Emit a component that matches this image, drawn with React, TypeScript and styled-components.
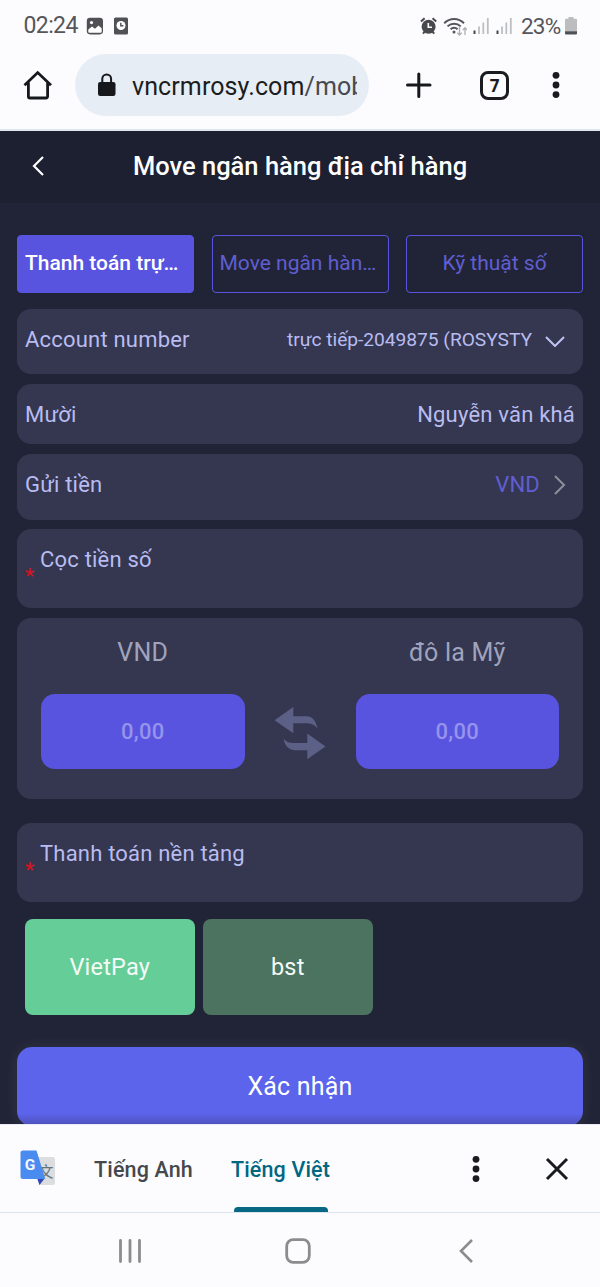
import React from "react";
import styled, { createGlobalStyle, css } from "styled-components";

const GlobalStyle = createGlobalStyle`
  * { box-sizing: border-box; }
  html, body { margin: 0; padding: 0; }
  body { background: #fcfcfe; font-family: Roboto, "Noto Sans", sans-serif; }
  button { font: inherit; border: 0; padding: 0; background: none; color: inherit; }
  svg { display: block; flex: none; }
`;

const Screen = styled.div`
  display: flex;
  flex-direction: column;
  width: 600px;
  height: 1287px;
  overflow: hidden;
  background: #fcfcfe;
`;

/* ---------- system status bar ---------- */

const StatusBar = styled.div`
  display: flex;
  align-items: center;
  height: 52px;
  padding: 0 23px 0 23.5px;
  color: #55565a;
  font-size: 23px;
  line-height: 52px;
`;

const Clock = styled.span`
  width: 62.5px;
  letter-spacing: -0.6px;
  white-space: nowrap;
`;

const StatusGroup = styled.div<{ $end?: boolean }>`
  display: flex;
  align-items: center;
  height: 52px;
  ${(p) => p.$end && css`margin-left: auto;`}
`;

const Gap = styled.span<{ $width: number }>`
  width: ${(p) => p.$width}px;
`;

const Battery = styled.span`
  width: 44px;
  font-size: 22.5px;
  letter-spacing: -0.8px;
  white-space: nowrap;
`;

/* ---------- browser toolbar ---------- */

const Toolbar = styled.div`
  display: flex;
  align-items: center;
  height: 79px;
  padding: 3px 0 14px 20px;
  border-bottom: 2px solid #dfe6ec;
`;

const AddressPill = styled.div`
  display: flex;
  align-items: center;
  width: 294px;
  height: 62px;
  margin: 0 28px 0 20px;
  padding-left: 20px;
  border-radius: 31px;
  background: #e7edf5;
  color: #1b1d21;
`;

const Url = styled.div`
  width: 225px;
  margin-left: 14px;
  padding-top: 3px;
  overflow: hidden;
  white-space: nowrap;
  font-size: 25px;
  line-height: 36px;
  letter-spacing: 0.1px;
`;

const UrlPath = styled.span`
  color: #474a50;
`;

const TabCount = styled.div`
  display: flex;
  align-items: center;
  justify-content: center;
  width: 29px;
  height: 29px;
  margin: 0 42px 0 40px;
  border: 3px solid #1b1c1f;
  border-radius: 8px;
  color: #1b1c1f;
  font-family: "Open Sans", sans-serif;
  font-size: 17px;
  font-weight: 700;
  line-height: 23px;
`;

/* ---------- site ---------- */

const Site = styled.main`
  height: 993px;
  overflow: hidden;
  background: #212436;
`;

const Header = styled.header`
  display: grid;
  grid-template-columns: 60px 1fr 60px;
  align-items: center;
  height: 72px;
  padding-bottom: 2px;
  background: #1d2030;
  color: #fff;
`;

const BackButton = styled.button`
  display: flex;
  justify-content: center;
  padding-left: 16px;
`;

const Title = styled.h1`
  margin: 0;
  font-size: 25.5px;
  font-weight: 500;
  line-height: 36px;
  text-align: center;
  white-space: nowrap;
`;

const Content = styled.div`
  padding: 32px 17px 0;
`;

const Tabs = styled.div`
  display: grid;
  grid-template-columns: repeat(3, 1fr);
  gap: 17.5px;
  margin-bottom: 16px;
`;

const Tab = styled.button<{ $active?: boolean; $long?: boolean }>`
  height: 58px;
  padding: 0 7px 2px;
  border: 1px solid #5854dd;
  border-radius: 4px;
  background: ${(p) => (p.$active ? "#5854e0" : "transparent")};
  color: ${(p) => (p.$active ? "#fff" : "#605ed2")};
  font-size: 21px;
  font-weight: ${(p) => (p.$active ? 500 : 400)};
  text-align: ${(p) => (p.$long ? "left" : "center")};
  white-space: nowrap;
  overflow: hidden;
`;

const Card = styled.section<{ $height: number; $gap?: number }>`
  height: ${(p) => p.$height}px;
  margin-bottom: ${(p) => p.$gap ?? 10}px;
  border-radius: 14px;
  background: #34374f;
`;

const Line = styled.div<{ $right?: number }>`
  display: flex;
  align-items: center;
  height: 61px;
  padding: 0 ${(p) => p.$right ?? 8}px 0 8px;
  color: #b9bcf1;
  font-size: 22px;
  line-height: 32px;
  letter-spacing: 0.2px;
  white-space: nowrap;
`;

const Value = styled.span<{ $size?: number; $tone?: string; $space?: number }>`
  margin-left: auto;
  color: ${(p) => p.$tone ?? "inherit"};
  font-size: ${(p) => p.$size ?? 22}px;
  letter-spacing: ${(p) => p.$space ?? 0.2}px;
`;

const Chevron = styled.svg`
  margin-left: 13px;
`;

const Required = styled.span`
  align-self: flex-end;
  width: 15px;
  height: 30px;
  color: #d5141f;
  font-size: 21px;
  font-weight: 500;
  line-height: 32px;
`;

const Exchange = styled.div`
  display: grid;
  grid-template-columns: 203.5px 1fr 203.5px;
  grid-template-rows: 76px 75px;
  padding: 0 24px;
`;

const CurrencyName = styled.div`
  padding-top: 17px;
  color: #a0a3bd;
  font-size: 25px;
  line-height: 36px;
  letter-spacing: 0.2px;
  text-align: center;
`;

const Amount = styled.div`
  display: flex;
  align-items: center;
  justify-content: center;
  border-radius: 14px;
  background: #5854e0;
  color: #9593ec;
  font-size: 22px;
  font-weight: 500;
  letter-spacing: 0.3px;
`;

const Swap = styled.div`
  display: flex;
  align-items: center;
  justify-content: center;
  padding-top: 2px;
`;

const Platforms = styled.div`
  display: flex;
  gap: 8.5px;
  padding: 0 8px;
  margin-bottom: 32px;
`;

const Platform = styled.button<{ $selected?: boolean }>`
  width: 169.5px;
  height: 96px;
  border-radius: 8px;
  background: ${(p) => (p.$selected ? "#65cd98" : "#4c7360")};
  color: #f4fbf7;
  font-size: 23.5px;
  letter-spacing: 0.2px;
`;

const Submit = styled.button`
  width: 100%;
  height: 79px;
  border-radius: 15px;
  background: linear-gradient(#5b64eb 84%, #5052bd 98%);
  box-shadow: 0 0 16px rgba(255, 255, 255, 0.08);
  color: #fff;
  font-size: 25px;
  letter-spacing: 0.2px;
`;

/* ---------- translate bar and system navigation ---------- */

const TranslateBar = styled.div`
  display: flex;
  align-items: center;
  height: 89px;
  padding: 0 30px 0 20px;
  border-top: 1px solid #e9ebf7;
  border-bottom: 1.5px solid #dde3ea;
`;

const Language = styled.div<{ $active?: boolean }>`
  display: flex;
  flex-direction: column;
  align-items: center;
  justify-content: space-between;
  height: 87px;
  margin-left: 38px;
  padding-top: 27px;
  color: ${(p) => (p.$active ? "#006783" : "#45484c")};
  font-size: 21.5px;
  font-weight: 500;
  line-height: 36px;
  letter-spacing: 0.15px;
  white-space: nowrap;
`;

const Indicator = styled.i`
  width: 94px;
  height: 5px;
  border-radius: 4px 4px 0 0;
  background: #086883;
`;

const BarActions = styled.div`
  display: flex;
  align-items: center;
  gap: 63px;
  margin-left: auto;
`;

const SystemNav = styled.nav`
  display: grid;
  grid-template-columns: 40px 40px 40px;
  justify-content: center;
  justify-items: center;
  column-gap: 128px;
  align-items: center;
  height: 74px;
  padding-right: 4px;
  padding-top: 2px;
`;

const Dots = () => (
  <svg width="10" height="28" viewBox="0 0 10 28" fill="#1a1b1e">
    <circle cx="5" cy="4.3" r="3.4" />
    <circle cx="5" cy="14" r="3.4" />
    <circle cx="5" cy="23.6" r="3.4" />
  </svg>
);

const Signal = () => (
  <svg width="17" height="18" viewBox="0 0 17 18">
    <path d="M1.5 13.5V17" stroke="#454649" strokeWidth="2" />
    <path d="M6 9.5V17M10.3 5.5V17M14.8 1V17" stroke="#bdbec1" strokeWidth="1.8" />
  </svg>
);

const SwapIcon = () => (
  <svg width="52" height="52" viewBox="0 0 52 52" fill="#5c5f86">
    <path d="M.5 13.300 19.300 0v9.300H32.500C38.500 9.300 42 14 43.500 21.500 40 17.200 36.500 16.300 32 16.300H19.300V26.200Z" />
    <path d="M51.500 39.500 33.300 26.500v9.500H20c-5 0-8-1.200-10.600-4.700C10.600 38.500 14.700 43.200 21 43.200h12.300v9Z" />
  </svg>
);

const TranslateLogo = () => (
  <svg width="36" height="37" viewBox="0 0 36 37">
    <path d="M14 7h18.500a2.500 2.500 0 0 1 2.500 2.500v23a2.500 2.500 0 0 1-2.500 2.500H19Z" fill="#dcdddf" />
    <text x="18.5" y="26.500" fontSize="15" fill="#65777d" fontFamily="'Noto Sans CJK SC', sans-serif">文</text>
    <path d="M17 28h8l-5.500 7Z" fill="#3547b5" />
    <path d="M3 .5h13.500L25.300 29H3A2.500 2.500 0 0 1 .5 26.500V3A2.500 2.500 0 0 1 3 .5Z" fill="#4a8bf0" />
    <text x="4.800" y="20.300" fontSize="15.500" fontWeight="700" fill="#f3f7ff" fontFamily="Roboto, sans-serif">G</text>
  </svg>
);

export default function App() {
  return (
    <>
      <GlobalStyle />
      <Screen>
        <StatusBar>
          <Clock>02:24</Clock>
          <StatusGroup>
            <svg width="18" height="18" viewBox="0 0 18 18">
              <rect x="1.600" y="1.600" width="14.600" height="15" rx="2.500" fill="#505154" stroke="#505154" strokeWidth="1.600" />
              <circle cx="5.500" cy="5.600" r="1.600" fill="#fff" />
              <path d="M2.300 12.500 6 9.500l3 2.200 3.500-3.200 3.200 2.700v3.600a1 1 0 0 1-1 1H3.300a1 1 0 0 1-1-1Z" fill="#fff" />
            </svg>
            <svg width="25" height="18" viewBox="0 0 25 18">
              <rect x="10" y=".5" width="14" height="17" rx="1.500" fill="#505154" />
              <circle cx="17" cy="8.500" r="4.500" fill="#fff" />
              <path d="M16.800 5.800v3h2.600" fill="none" stroke="#505154" strokeWidth="1.400" />
            </svg>
          </StatusGroup>
          <StatusGroup $end>
            <svg width="18" height="18" viewBox="0 0 18 18">
              <circle cx="8.600" cy="9.700" r="7" fill="#48494c" />
              <path d="M1 4.600 4.600 1.300M16.200 4.600l-3.600-3.300M3 16.700l2-2.300M14.200 16.700l-2-2.300" stroke="#48494c" strokeWidth="2" />
              <path d="M8.300 6v4.300h3.700" fill="none" stroke="#fff" strokeWidth="1.600" />
            </svg>
            <svg width="29" height="20" viewBox="0 0 29 20">
              <g fill="none" stroke="#55565a" strokeWidth="2">
                <path d="M6.200 7.300c5.600-5.700 14.200-5.700 19.800 0" />
                <path d="M9.500 10.400c3.800-3.700 9.500-3.700 13.200 0" />
                <path d="M12.600 13.200c2-1.800 5-1.800 7 0" />
              </g>
              <circle cx="16" cy="16" r="1.500" fill="#55565a" />
              <path d="M21.500 11v8m-2.200-2.200 2.200 2.200 2.200-2.200M27 19v-7m-2.100 2L27 11.700l2 2.200" fill="none" stroke="#aeafb2" strokeWidth="1.300" />
            </svg>
            <Gap $width={6} />
            <Signal />
            <Gap $width={6} />
            <Signal />
            <Gap $width={8} />
            <Battery>23%</Battery>
            <svg width="12" height="18" viewBox="0 0 12 18">
              <path d="M3.500 0h5v1.800H11a1 1 0 0 1 1 1V14.500H0V2.800a1 1 0 0 1 1-1h2.500Z" fill="#bcbdbf" />
              <path d="M0 14.300h12v2.200a1 1 0 0 1-1 1H1a1 1 0 0 1-1-1Z" fill="#505154" />
            </svg>
          </StatusGroup>
        </StatusBar>

        <Toolbar>
          <svg width="35" height="34" viewBox="0 0 35 34" fill="none" stroke="#17181b" strokeWidth="2.800">
            <path d="M4.500 17.200 17.700 4.600 31 17.200M8.400 14.500v14a1.500 1.500 0 0 0 1.500 1.500h16.200a1.500 1.500 0 0 0 1.500-1.500v-14" />
          </svg>
          <AddressPill>
            <svg width="23" height="26" viewBox="0 0 23 26">
              <rect x="3" y="10" width="17.500" height="14" rx="2.200" fill="#17181b" />
              <path d="M7.300 11V6.800a4.400 4.400 0 0 1 8.800 0V11" fill="none" stroke="#17181b" strokeWidth="2" />
            </svg>
            <Url>vncrmrosy.com<UrlPath>/mob</UrlPath></Url>
          </AddressPill>
          <svg width="43" height="26" viewBox="0 0 43 26" fill="none" stroke="#17181b" strokeWidth="3" strokeLinecap="round">
            <path d="M10.500 13h22.500M21.800 2v22.500" />
          </svg>
          <TabCount>7</TabCount>
          <Dots />
        </Toolbar>

        <Site>
          <Header>
            <BackButton aria-label="Back">
              <svg width="14" height="22" viewBox="0 0 14 22" fill="none" stroke="#fff" strokeWidth="2.200">
                <path d="M12 2 3 11l9 9" />
              </svg>
            </BackButton>
            <Title>Move ngân hàng địa chỉ hàng</Title>
          </Header>

          <Content>
            <Tabs>
              <Tab $active $long>Thanh toán trự…</Tab>
              <Tab $long>Move ngân hàn…</Tab>
              <Tab>Kỹ thuật số</Tab>
            </Tabs>

            <Card $height={65}>
              <Line $right={18}>
                Account number
                <Value $size={19.2} $space={-0.03}>trực tiếp-2049875 (ROSYSTY</Value>
                <Chevron width="20" height="14" viewBox="0 0 20 14" fill="none" stroke="#c0c3f2" strokeWidth="2">
                  <path d="M1 4 10 13l9-9" />
                </Chevron>
              </Line>
            </Card>
            <Card $height={60}>
              <Line>
                Mười
                <Value>Nguyễn văn khá</Value>
              </Line>
            </Card>
            <Card $height={66} $gap={9}>
              <Line $right={17}>
                Gửi tiền
                <Value $tone="#605ed2">VND</Value>
                <Chevron width="13" height="20" viewBox="0 0 13 20" fill="none" stroke="#8d8e98" strokeWidth="2">
                  <path d="m2 1 9 9-9 9" />
                </Chevron>
              </Line>
            </Card>
            <Card $height={79}>
              <Line>
                <Required>*</Required>
                Cọc tiền số
              </Line>
            </Card>

            <Card $height={181} $gap={24}>
              <Exchange>
                <CurrencyName>VND</CurrencyName>
                <span />
                <CurrencyName>đô la Mỹ</CurrencyName>
                <Amount>0,00</Amount>
                <Swap><SwapIcon /></Swap>
                <Amount>0,00</Amount>
              </Exchange>
            </Card>

            <Card $height={79} $gap={17}>
              <Line>
                <Required>*</Required>
                Thanh toán nền tảng
              </Line>
            </Card>

            <Platforms>
              <Platform $selected>VietPay</Platform>
              <Platform>bst</Platform>
            </Platforms>

            <Submit>Xác nhận</Submit>
          </Content>
        </Site>

        <TranslateBar>
          <TranslateLogo />
          <Language>Tiếng Anh</Language>
          <Language $active>
            Tiếng Việt
            <Indicator />
          </Language>
          <BarActions>
            <Dots />
            <svg width="26" height="26" viewBox="0 0 26 26" fill="none" stroke="#1a1b1e" strokeWidth="3">
              <path d="m3 3 20 20M23 3 3 23" />
            </svg>
          </BarActions>
        </TranslateBar>

        <SystemNav>
          <svg width="24" height="26" viewBox="0 0 24 26" stroke="#8c8c8f" strokeWidth="2.800" strokeLinecap="round">
            <path d="M2.500 2.500v21M12 2.500v21M21.500 2.500v21" />
          </svg>
          <svg width="26" height="26" viewBox="0 0 26 26" fill="none" stroke="#8c8c8f" strokeWidth="2.800">
            <rect x="1.700" y="1.700" width="22.600" height="22.600" rx="6.500" />
          </svg>
          <svg width="16" height="26" viewBox="0 0 16 26" fill="none" stroke="#8c8c8f" strokeWidth="2.600">
            <path d="M14 2 3 13l11 11" />
          </svg>
        </SystemNav>
      </Screen>
    </>
  );
}
